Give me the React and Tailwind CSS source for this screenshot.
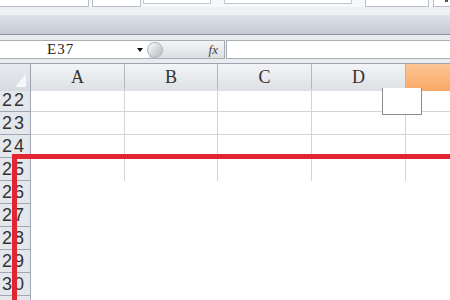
import React from 'react';

const cols = ['A', 'B', 'C', 'D'];
const rows = [22, 23, 24, 25, 26, 27, 28, 29, 30];

export default function App() {
  return (
    <div className="relative w-[450px] h-[300px] overflow-hidden bg-white font-['Liberation_Sans',sans-serif]">
      {/* ribbon bottom edge */}
      <div className="flex h-[7px] bg-[#f7f8f9]">
        <div className="w-[89px] h-[7px] border-r border-b border-[#b9bec6] bg-white" />
        <div className="ml-[3px] w-[49px] h-[7px] border-x border-b border-[#b9bec6] bg-white" />
        <div className="ml-[2px] w-[68px] h-[4px] border-x border-b border-[#c3c7cd] bg-white" />
        <div className="ml-[13px] w-[128px] h-[4px] border-x border-b border-[#c3c7cd] bg-white" />
        <div className="ml-[13px] w-[64px] h-[7px] border-x border-b border-[#b9bec6] bg-white" />
        <div className="ml-[4px] flex-1 h-[7px] border-l border-b border-[#b9bec6] bg-white relative">
          <div className="absolute left-[11px] top-0 w-[3px] h-[2px] bg-[#555]" />
        </div>
      </div>
      <div className="h-[8px] bg-[#eef1f3]" />
      <div className="h-[19px] bg-gradient-to-b from-[#dee3ea] to-[#c6cbd4]" />
      <div className="h-px bg-[#8b9097]" />
      <div className="h-[5px] bg-[#e9ebee]" />

      {/* formula bar */}
      <div className="flex h-[19px] bg-[#e9ebee]">
        <div className="relative w-[149px] h-[19px] bg-white border-y border-[#a9aeb5] flex items-center">
          <span className="ml-[47px] font-['Liberation_Serif',serif] text-[15px] tracking-[1px] leading-none text-[#222]">E37</span>
          <div className="absolute left-[137px] top-[7px] w-0 h-0 border-x-[3px] border-x-transparent border-t-[4px] border-t-[#111]" />
        </div>
        <div className="relative w-[76px] h-[19px] border-y border-r border-[#a9aeb5] bg-gradient-to-b from-[#f4f5f6] to-[#dcdfe3] flex items-center">
          <div className="absolute -left-[2px] top-[1px] w-[16px] h-[16px] rounded-full border border-[#b0b4ba] bg-gradient-to-br from-[#ffffff] via-[#d7dadd] to-[#b7bbc0]" />
          <span className="ml-auto mr-[6px] font-['Liberation_Serif',serif] italic text-[13px] leading-none text-[#444]">fx</span>
        </div>
        <div className="ml-px flex-1 h-[19px] bg-white border-y border-l border-[#a9aeb5]" />
      </div>
      <div className="h-[4px] bg-[#e9ebee]" />

      {/* column header */}
      <div className="grid grid-cols-[31px_94px_93px_94px_94px_1fr] h-[26px] border-y border-[#9aa3ae]">
        <div className="relative bg-gradient-to-b from-[#e8ebef] to-[#d6dbe1] border-r border-[#9aa3ae]">
          <div className="absolute right-[4px] bottom-[4px] w-0 h-0 border-l-[11px] border-l-transparent border-b-[13px] border-b-[#f6f7f9]" />
        </div>
        {cols.map((c) => (
          <div
            key={c}
            className="flex items-center justify-center bg-gradient-to-b from-[#f3f4f6] to-[#dde0e4] border-r border-[#b2b8c0] font-['Liberation_Serif',serif] text-[18px] text-[#333]"
          >
            {c}
          </div>
        ))}
        <div className="bg-gradient-to-b from-[#fdc594] to-[#f8a865]" />
      </div>

      {/* rows */}
      {rows.map((r) => (
        <div key={r} className="grid grid-cols-[31px_94px_93px_94px_94px_1fr] h-[23px]">
          <div className="flex items-center pl-[2px] bg-[#e4e8ed] border-r border-b border-[#9ea7b3] text-[18px] tracking-[2px] text-[#333] leading-none">
            {r}
          </div>
          {[0, 1, 2, 3, 4].map((i) => (
            <div
              key={i}
              className={
                (r <= 25 && i < 4 ? 'border-r border-[#d4d4d4] ' : '') +
                (r <= 24 ? 'border-b border-[#d4d4d4]' : '')
              }
            />
          ))}
        </div>
      ))}
      {/* row 31, only its top edge is in view */}
      <div className="grid grid-cols-[31px_1fr] h-[23px]">
        <div className="bg-[#e4e8ed] border-r border-[#9ea7b3]" />
        <div />
      </div>

      {/* shape box over D/E */}
      <div className="absolute left-[382px] top-[88px] w-[40px] h-[27px] bg-white border border-[#8c8c8c] border-t-0" />

      {/* red selection outline */}
      <div className="absolute left-[12px] top-[154px] w-[438px] h-[5px] bg-[#e12632]" />
      <div className="absolute left-[12px] top-[154px] w-[5px] h-[146px] bg-[#e12632]" />
    </div>
  );
}
